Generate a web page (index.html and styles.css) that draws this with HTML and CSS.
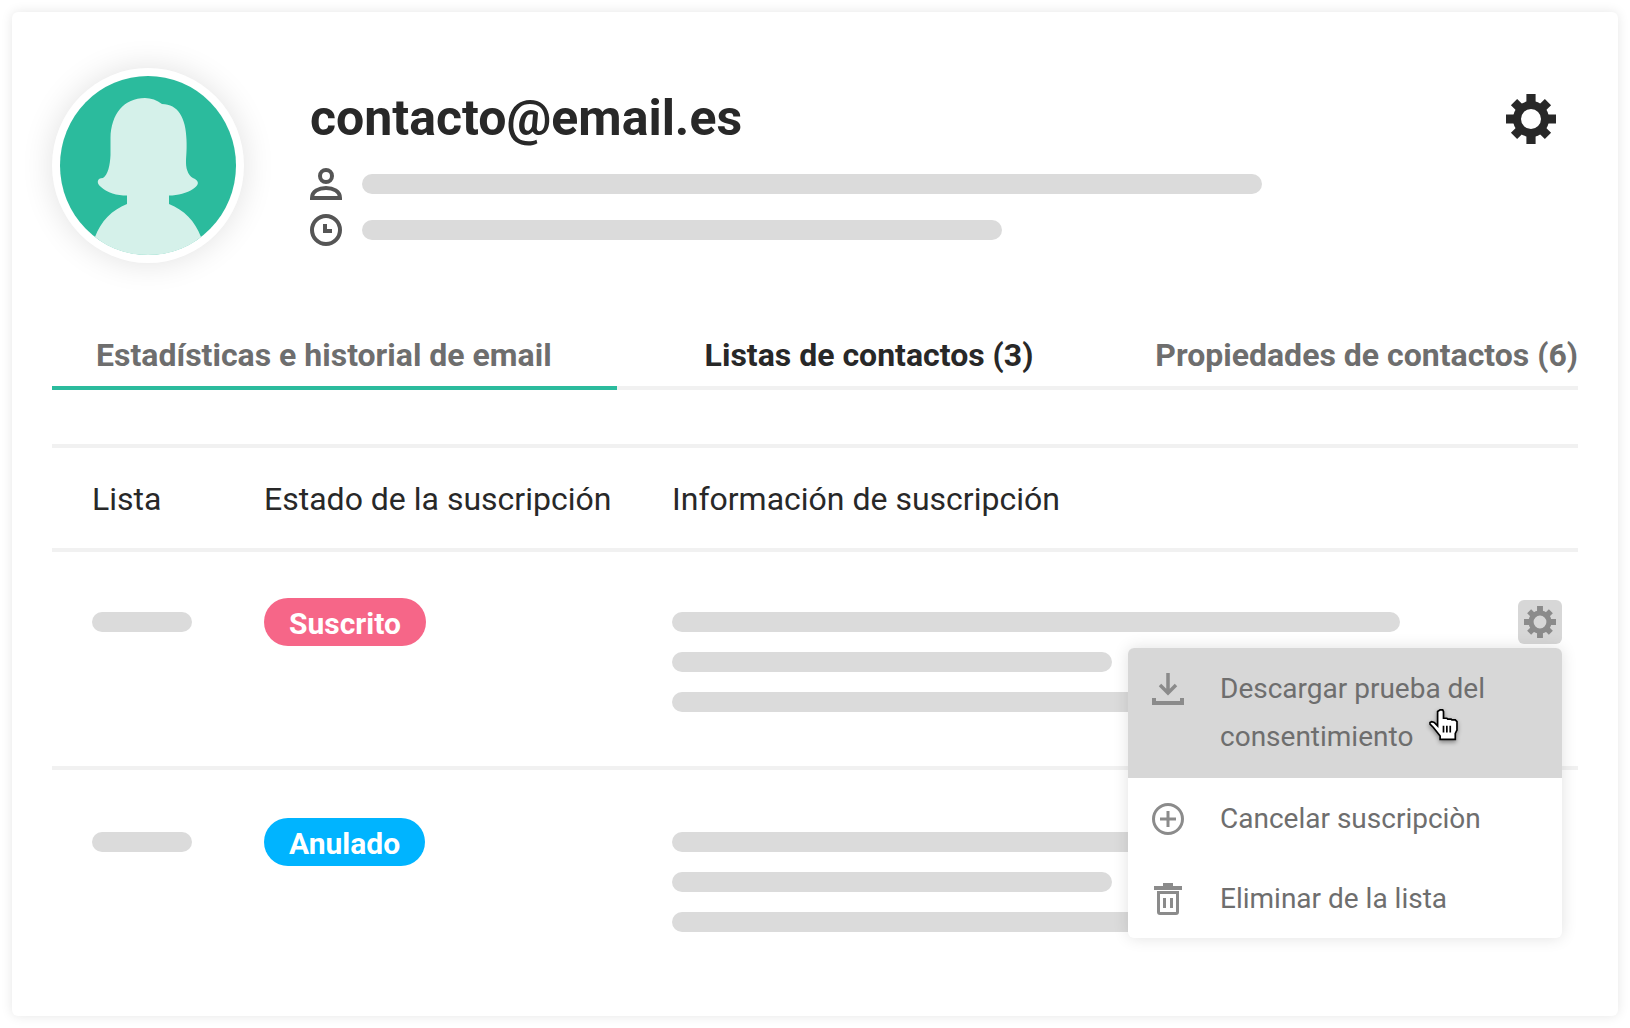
FILE: index.html
```html
<!DOCTYPE html>
<html lang="es">
<head>
	<meta charset="UTF-8">
	<meta name="viewport" content="width=device-width, initial-scale=1">
	<title>contacto@email.es</title>
	<link rel="stylesheet" href="styles.css">
</head>
<body>
	<!-- shared gear icon -->
	<svg class="sprite" aria-hidden="true">
		<symbol id="gear" viewBox="0 0 50 50">
			<g fill="currentColor">
				<path d="M20.4 0h9.2v9h-9.2zM20.4 41h9.2v9h-9.2zM0 20.4h9v9.2h-9zM41 20.4h9v9.2h-9z"/>
				<path transform="rotate(45 25 25)" d="M20.6 1h8.8v9h-8.8zM20.6 40h8.8v9h-8.8zM1 20.6h9v8.8h-9zM40 20.6h9v8.8h-9z"/>
			</g>
			<circle cx="25" cy="25" r="14" fill="none" stroke="currentColor" stroke-width="8"/>
		</symbol>
	</svg>

	<main class="card">
		<header class="profile">
			<div class="avatar">
				<svg viewBox="0 0 176 179" preserveAspectRatio="none" aria-hidden="true">
					<ellipse cx="88" cy="89.500" rx="88" ry="89.500" fill="#2bbb9d"/>
					<path fill="#d5f1ea" d="M85 22C91 22 97 24 102 28C118 28 126 42 126.500 64C127 75 126 80 126 87C126 94 129 101 135 103C140 106 138 110 133 113C127 117 118 119.500 109 119.500V128C124 134 135 145 141 161C126 173 108 179 88 179S50 173 35 161C41 145 52 134 67 128V119.500C57 119.500 47 117 41 111C36 107 37 102 43 102C48 99 50 89 50.500 79V62C51 38 64 22 85 22Z"/>
				</svg>
			</div>
			<div class="info">
				<h1>contacto@email.es</h1>
				<div class="line">
					<svg class="icon" viewBox="0 0 32 32" aria-hidden="true">
						<g fill="none" stroke="#555" stroke-width="4">
							<circle cx="16" cy="8" r="6"/>
							<path d="M2 30C2 23 9 20 16 20S30 23 30 30Z"/>
						</g>
					</svg>
					<span class="bar bar-name"></span>
				</div>
				<div class="line">
					<svg class="icon" viewBox="0 0 32 32" aria-hidden="true">
						<g fill="none" stroke="#555" stroke-width="4">
							<circle cx="16" cy="16" r="14"/>
							<path d="M15 10v7h7"/>
						</g>
					</svg>
					<span class="bar bar-date"></span>
				</div>
			</div>
			<button class="settings" type="button" aria-label="Ajustes">
				<svg width="50" height="50"><use href="#gear"/></svg>
			</button>
		</header>

		<div class="tabs" role="tablist">
			<button class="tab tab-stats" type="button" role="tab">Estadísticas e historial de email</button>
			<button class="tab tab-lists" type="button" role="tab" aria-selected="true">Listas de contactos (3)</button>
			<button class="tab tab-props" type="button" role="tab">Propiedades de contactos (6)</button>
		</div>

		<table class="lists">
			<thead>
				<tr>
					<th class="col-list">Lista</th>
					<th class="col-state">Estado de la suscripción</th>
					<th>Información de suscripción</th>
					<td class="col-action"></td>
				</tr>
			</thead>
			<tbody>
				<tr>
					<td class="col-list"><div class="bars"><span class="bar"></span></div></td>
					<td><span class="badge subscribed">Suscrito</span></td>
					<td>
						<div class="bars">
							<span class="bar bar-long"></span>
							<span class="bar bar-short"></span>
							<span class="bar bar-long"></span>
						</div>
					</td>
					<td class="col-action">
						<div class="actions">
							<button class="action-btn" type="button" aria-label="Acciones" aria-expanded="true">
								<svg width="32" height="32"><use href="#gear"/></svg>
							</button>
							<div class="menu" role="menu">
								<button class="hover" type="button" role="menuitem">
									<svg class="icon" viewBox="0 0 32 32" aria-hidden="true">
										<g fill="none" stroke="#8b8b8b" stroke-width="4">
											<path d="M2 25v5h28v-5"/>
											<path d="M16 0v20M8 12l8 8 8-8" stroke-width="3.500"/>
										</g>
									</svg>
									<span>Descargar prueba del consentimiento</span>
								</button>
								<button type="button" role="menuitem">
									<svg class="icon" viewBox="0 0 32 32" aria-hidden="true">
										<g fill="none" stroke="#8b8b8b" stroke-width="3">
											<circle cx="16" cy="16" r="14.500"/>
											<path d="M16 8v16M8 16h16"/>
										</g>
									</svg>
									<span>Cancelar suscripciòn</span>
								</button>
								<button type="button" role="menuitem">
									<svg class="icon" viewBox="0 0 32 32" aria-hidden="true">
										<path fill="#8b8b8b" d="M11 0h10v3h9v4H2V3h9z"/>
										<g fill="none" stroke="#8b8b8b" stroke-width="3">
											<path d="M6.500 9.500h19V29q0 1.500-1.500 1.500H8q-1.500 0-1.500-1.500z"/>
											<path d="M12.500 15v10M19.500 15v10"/>
										</g>
									</svg>
									<span>Eliminar de la lista</span>
								</button>
								<svg class="cursor" viewBox="0 0 17 19" aria-hidden="true">
									<path fill="#fff" stroke="#000" d="M6.500.5H8l.5 1v4h2l.5.5h2l.5.5h2l1 1v5l-1 2v3.500h-9v-2l-4-5-2-2V8l1-.5 1.500.5 2 2V1.500z"/>
									<path stroke="#000" d="M8.500 10v4M10.500 10v4M12.500 10v4"/>
								</svg>
							</div>
						</div>
					</td>
				</tr>
				<tr>
					<td class="col-list"><div class="bars"><span class="bar"></span></div></td>
					<td><span class="badge cancelled">Anulado</span></td>
					<td>
						<div class="bars">
							<span class="bar bar-long"></span>
							<span class="bar bar-short"></span>
							<span class="bar bar-long"></span>
						</div>
					</td>
					<td class="col-action"></td>
				</tr>
			</tbody>
		</table>
	</main>
</body>
</html>
```
FILE: styles.css
```css
*{box-sizing: border-box;}
body{
	margin: 0;
	padding: 12px;
	background: #fff;
	font-family: Roboto,"Liberation Sans",sans-serif;
	color: #282828;
}
button{
	margin: 0;
	padding: 0;
	border: 0;
	background: none;
	font: inherit;
	color: inherit;
	cursor: pointer;
}
svg{display: block;}
.sprite{position: absolute;width: 0;height: 0;}
.icon{width: 32px;height: 32px;flex: none;}

.card{
	min-height: calc(100vh - 24px);
	padding: 56px 40px 30px;
	border-radius: 6px;
	background: #fff;
	box-shadow: 0 0 12px rgba(0,0,0,.1);
}

/* profile */
.profile{display: flex;align-items: flex-start;}
.avatar{
	flex: none;
	width: 192px;
	height: 195px;
	padding: 8px;
	border-radius: 50%;
	background: #fff;
	box-shadow: 0 0 32px rgba(0,0,0,.12);
}
.avatar svg{width: 176px;height: 179px;}
.info{flex: 1;margin-left: 66px;padding-top: 20px;}
.info h1{margin: 0 0 20px;font-size: 50px;line-height: 60px;font-weight: 700;}
.line{display: flex;align-items: center;gap: 20px;margin-bottom: 14px;}
.bar{display: block;height: 20px;border-radius: 10px;background: #dbdbdb;}
.bar-name{width: 900px;}
.bar-date{width: 640px;}
.settings{margin: 26px 22px 0 0;}

/* tabs */
.tabs{display: flex;margin-top: 63px;border-bottom: 4px solid #f1f1f1;}
.tab{
	margin-bottom: -4px;
	padding: 10px 0 12px;
	border-bottom: 4px solid transparent;
	font-size: 32px;
	line-height: 38px;
	font-weight: 700;
	color: #6e6e6e;
	text-align: left;
	white-space: nowrap;
}
.tab-stats{width: 37%;padding-left: 44px;border-color: #2bbb9d;}
.tab-lists{flex: 1;padding-left: 88px;color: #282828;}

/* lists */
.lists{
	width: 100%;
	margin-top: 54px;
	border-top: 4px solid #f1f1f1;
	border-collapse: separate;
	border-spacing: 0;
	table-layout: fixed;
}
.lists th{
	height: 104px;
	padding: 2px 0 0;
	border-bottom: 4px solid #f1f1f1;
	font-size: 32px;
	font-weight: 400;
	text-align: left;
	white-space: nowrap;
}
.lists thead td{border-bottom: 4px solid #f1f1f1;}
.lists .col-list{width: 212px;padding-left: 40px;}
.lists .col-state{width: 408px;}
.lists .col-action{width: 60px;}
.lists tbody td{padding: 46px 0 54px;vertical-align: top;}
.lists tbody tr:first-child td{border-bottom: 4px solid #f1f1f1;}
.lists tbody tr + tr td{padding-top: 48px;}
.bars{display: grid;gap: 20px;padding-top: 14px;}
.col-list .bar{width: 100px;}
.bar-long{width: 728px;}
.bar-short{width: 440px;}
.badge{
	display: inline-block;
	padding: 3px 25px 0;
	border-radius: 24px;
	font-size: 30px;
	line-height: 45px;
	font-weight: 700;
	color: #fff;
	vertical-align: top;
}
.subscribed{background: #f66688;}
.cancelled{background: #00b4ff;}

/* row menu */
.actions{position: relative;width: 44px;margin-top: 2px;}
.action-btn{
	display: block;
	padding: 6px;
	border-radius: 6px;
	background: #d7d7d7;
	color: #8b8b8b;
}
.menu{
	position: absolute;
	top: 48px;
	right: 0;
	z-index: 1;
	width: 434px;
	border-radius: 6px;
	background: #fff;
	box-shadow: 0 0 16px rgba(0,0,0,.12);
}
.menu button{
	display: flex;
	gap: 36px;
	width: 100%;
	padding: 17px 24px 15px;
	font-size: 28px;
	line-height: 48px;
	color: #6e6e6e;
	text-align: left;
}
.menu button .icon{margin-top: 8px;}
.menu .hover{padding-bottom: 17px;border-radius: 6px 6px 0 0;background: #d7d7d7;}
.cursor{
	position: absolute;
	top: 61px;
	left: 301px;
	width: 29px;
	height: 32px;
	filter: drop-shadow(0 2px 2px rgba(0,0,0,.4));
}
```
